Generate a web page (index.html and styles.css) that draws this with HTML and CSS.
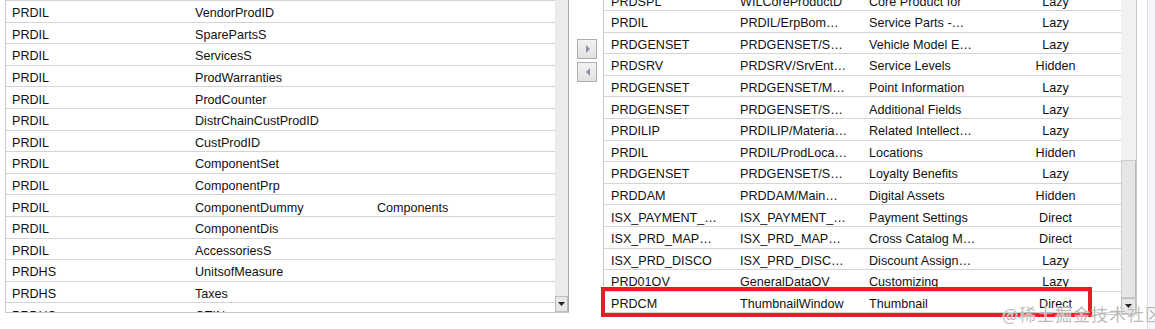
FILE: index.html
```html
<!DOCTYPE html>
<html>
<head>
<meta charset="utf-8">
<link rel="stylesheet" href="styles.css">
</head>
<body>
<div class="page">
  <div class="panel panel-left">
    <div class="list">
      <div class="rows rows-left">
        <div class="row"><div class="c l1">PRDIL</div><div class="c l2">VendorS</div><div class="c l3"></div></div>
        <div class="row"><div class="c l1">PRDIL</div><div class="c l2">VendorProdID</div><div class="c l3"></div></div>
        <div class="row"><div class="c l1">PRDIL</div><div class="c l2">SparePartsS</div><div class="c l3"></div></div>
        <div class="row"><div class="c l1">PRDIL</div><div class="c l2">ServicesS</div><div class="c l3"></div></div>
        <div class="row"><div class="c l1">PRDIL</div><div class="c l2">ProdWarranties</div><div class="c l3"></div></div>
        <div class="row"><div class="c l1">PRDIL</div><div class="c l2">ProdCounter</div><div class="c l3"></div></div>
        <div class="row"><div class="c l1">PRDIL</div><div class="c l2">DistrChainCustProdID</div><div class="c l3"></div></div>
        <div class="row"><div class="c l1">PRDIL</div><div class="c l2">CustProdID</div><div class="c l3"></div></div>
        <div class="row"><div class="c l1">PRDIL</div><div class="c l2">ComponentSet</div><div class="c l3"></div></div>
        <div class="row"><div class="c l1">PRDIL</div><div class="c l2">ComponentPrp</div><div class="c l3"></div></div>
        <div class="row"><div class="c l1">PRDIL</div><div class="c l2">ComponentDummy</div><div class="c l3">Components</div></div>
        <div class="row"><div class="c l1">PRDIL</div><div class="c l2">ComponentDis</div><div class="c l3"></div></div>
        <div class="row"><div class="c l1">PRDIL</div><div class="c l2">AccessoriesS</div><div class="c l3"></div></div>
        <div class="row"><div class="c l1">PRDHS</div><div class="c l2">UnitsofMeasure</div><div class="c l3"></div></div>
        <div class="row"><div class="c l1">PRDHS</div><div class="c l2">Taxes</div><div class="c l3"></div></div>
        <div class="row"><div class="c l1">PRDHS</div><div class="c l2">GTIN</div><div class="c l3"></div></div>
      </div>
    </div>
    <div class="vscroll vscroll-left">
      <div class="track"></div>
      <div class="sbtn"><svg width="7" height="4" viewBox="0 0 7 4"><polygon points="0,0 7,0 3.5,4" fill="#222"/></svg></div>
    </div>
  </div>

  <div class="mover">
    <div class="mbtn"><svg width="18" height="18" viewBox="0 0 18 18"><polygon points="8,5 12,9 8,13" fill="#8f90a3"/></svg></div>
    <div class="mbtn"><svg width="18" height="18" viewBox="0 0 18 18"><polygon points="12,5 8,9 12,13" fill="#8f90a3"/></svg></div>
  </div>

  <div class="panel panel-right">
    <div class="list">
      <div class="rows rows-right">
        <div class="row"><div class="c r1">PRDSPL</div><div class="c r2">WILCoreProductD</div><div class="c r3">Core Product for</div><div class="c r4">Lazy</div></div>
        <div class="row"><div class="c r1">PRDIL</div><div class="c r2">PRDIL/ErpBom…</div><div class="c r3">Service Parts -…</div><div class="c r4">Lazy</div></div>
        <div class="row"><div class="c r1">PRDGENSET</div><div class="c r2">PRDGENSET/S…</div><div class="c r3">Vehicle Model E…</div><div class="c r4">Lazy</div></div>
        <div class="row"><div class="c r1">PRDSRV</div><div class="c r2">PRDSRV/SrvEnt…</div><div class="c r3">Service Levels</div><div class="c r4">Hidden</div></div>
        <div class="row"><div class="c r1">PRDGENSET</div><div class="c r2">PRDGENSET/M…</div><div class="c r3">Point Information</div><div class="c r4">Lazy</div></div>
        <div class="row"><div class="c r1">PRDGENSET</div><div class="c r2">PRDGENSET/S…</div><div class="c r3">Additional Fields</div><div class="c r4">Lazy</div></div>
        <div class="row"><div class="c r1">PRDILIP</div><div class="c r2">PRDILIP/Materia…</div><div class="c r3">Related Intellect…</div><div class="c r4">Lazy</div></div>
        <div class="row"><div class="c r1">PRDIL</div><div class="c r2">PRDIL/ProdLoca…</div><div class="c r3">Locations</div><div class="c r4">Hidden</div></div>
        <div class="row"><div class="c r1">PRDGENSET</div><div class="c r2">PRDGENSET/S…</div><div class="c r3">Loyalty Benefits</div><div class="c r4">Lazy</div></div>
        <div class="row"><div class="c r1">PRDDAM</div><div class="c r2">PRDDAM/Main…</div><div class="c r3">Digital Assets</div><div class="c r4">Hidden</div></div>
        <div class="row"><div class="c r1">ISX_PAYMENT_…</div><div class="c r2">ISX_PAYMENT_…</div><div class="c r3">Payment Settings</div><div class="c r4">Direct</div></div>
        <div class="row"><div class="c r1">ISX_PRD_MAP…</div><div class="c r2">ISX_PRD_MAP…</div><div class="c r3">Cross Catalog M…</div><div class="c r4">Direct</div></div>
        <div class="row"><div class="c r1">ISX_PRD_DISCO</div><div class="c r2">ISX_PRD_DISC…</div><div class="c r3">Discount Assign…</div><div class="c r4">Lazy</div></div>
        <div class="row"><div class="c r1">PRD01OV</div><div class="c r2">GeneralDataOV</div><div class="c r3">Customizing</div><div class="c r4">Lazy</div></div>
        <div class="row"><div class="c r1">PRDCM</div><div class="c r2">ThumbnailWindow</div><div class="c r3">Thumbnail</div><div class="c r4">Direct</div></div>
      </div>
    </div>
    <div class="vscroll vscroll-right">
      <div class="track"></div>
      <div class="thumb"></div>
      <div class="sbtn"><svg width="7" height="4" viewBox="0 0 7 4"><polygon points="0,0 7,0 3.5,4" fill="#222"/></svg></div>
    </div>
  </div>

  <div class="edge"></div>
</div>

<div class="highlight"></div>
<div class="watermark">@稀土掘金技术社区</div>
</body>
</html>
```

FILE: styles.css
```css
* { box-sizing: border-box; }

html, body {
  margin: 0;
  padding: 0;
  background: #ffffff;
}

body {
  width: 1155px;
  height: 329px;
  overflow: hidden;
  position: relative;
  font-family: "Liberation Sans", Arial, sans-serif;
  font-size: 12.6px;
  color: #111111;
}

.page {
  display: flex;
  align-items: flex-start;
  height: 329px;
}

.panel {
  display: flex;
  overflow: hidden;
  border-left: 1px solid #c8c8c8;
  border-bottom: 1px solid #c8c8c8;
}

.panel-left {
  margin-left: 5px;
  width: 564px;
  height: 313px;
}

.panel-right {
  width: 534px;
  height: 315px;
}

.list {
  flex: 1;
  overflow: hidden;
}

.rows-left { margin-top: -20.6px; }
.rows-right { margin-top: -10.6px; }

.row {
  display: flex;
  align-items: center;
  height: 21.6px;
  padding-top: 4px;
  border-bottom: 1px solid #d4d4d4;
  white-space: nowrap;
}

.c {
  overflow: hidden;
  padding-left: 6px;
}

.l1 { width: 183px; }
.l2 { width: 182px; }
.l3 { flex: 1; }

.r1, .r2, .r3 { width: 129px; padding-left: 7px; }
.r4 { flex: 1; text-align: center; padding-left: 0; padding-right: 1px; }

.vscroll {
  display: flex;
  flex-direction: column;
}

.vscroll-left {
  width: 14px;
  background: #ebebeb;
  border-right: 1px solid #a9a9a9;
}

.vscroll-right {
  width: 16px;
  background: #f2f2f2;
  border-right: 1px solid #c4c4c4;
}

.vscroll-left .track { flex: 1; }
.vscroll-right .track { height: 160px; }

.thumb {
  flex: 1;
  background: #e6e6e6;
  border: 1px solid #cdcdcd;
  border-right-color: #b8b8b8;
}

.sbtn {
  height: 16px;
  display: flex;
  align-items: center;
  justify-content: center;
  background: #e7e7e7;
  border: 1px solid #bdbdbd;
}

.mover {
  width: 34px;
  padding-left: 8px;
  padding-top: 39px;
  display: flex;
  flex-direction: column;
  gap: 3px;
}

.mbtn {
  width: 20px;
  height: 20px;
  border: 1px solid #aeaeae;
  background: linear-gradient(#f3f3f3, #e1e1e1);
  display: flex;
}

.edge {
  margin-left: 10px;
  width: 8px;
  height: 329px;
  border-left: 1px solid #dce0f0;
  background: #f5f6fc;
}

.highlight {
  position: absolute;
  left: 601px;
  top: 287px;
  width: 491px;
  height: 30px;
  border: 4px solid #e61d25;
}

.watermark {
  position: absolute;
  left: 1002px;
  top: 301px;
  font-family: "Noto Sans CJK SC", "Liberation Sans", sans-serif;
  font-size: 17px;
  letter-spacing: 1px;
  color: rgba(125, 125, 125, 0.55);
  text-shadow: 0 0 1px #fff, 0 0 1px #fff;
  white-space: nowrap;
}
```
